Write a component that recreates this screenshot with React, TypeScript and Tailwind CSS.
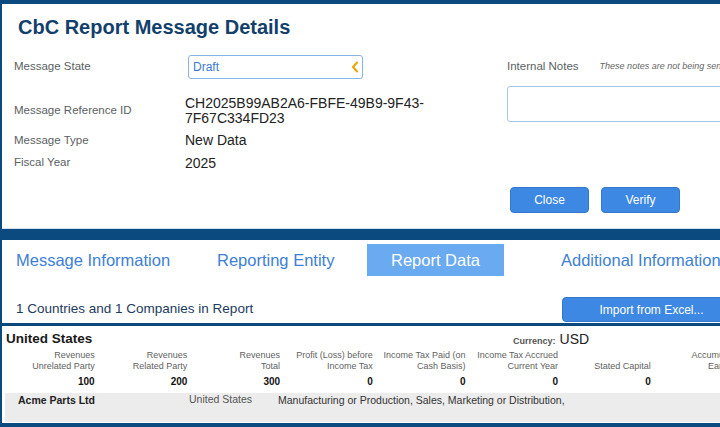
import React from 'react';

const columns = [
  { title: ['Revenues', 'Unrelated Party'], value: '100' },
  { title: ['Revenues', 'Related Party'], value: '200' },
  { title: ['Revenues', 'Total'], value: '300' },
  { title: ['Profit (Loss) before', 'Income Tax'], value: '0' },
  { title: ['Income Tax Paid (on', 'Cash Basis)'], value: '0' },
  { title: ['Income Tax Accrued', 'Current Year'], value: '0' },
  { title: ['', 'Stated Capital'], value: '0' },
  { title: ['Accumulated', 'Earnings'], value: '0' },
];

const DetailRow: React.FC<{ label: string; className?: string; children: React.ReactNode }> = ({
  label,
  className,
  children,
}) => (
  <div className={`flex items-center ${className ?? ''}`}>
    <div className="w-[171px] shrink-0 text-[11.5px] text-[#5b5f63]">{label}</div>
    <div className="text-[14px] leading-[15px] text-[#222]">{children}</div>
  </div>
);

export default function App() {
  return (
    <div className="w-[720px] h-[427px] overflow-hidden bg-[#0b4a7e] pl-[2px] pt-[4px] font-['Liberation_Sans',Arial,sans-serif]">
      {/* message header */}
      <div className="h-[225px] w-[760px] bg-white border-b border-[#cfe2f3] pt-[10px]">
        <h1 className="pl-[16px] text-[20px] leading-[26px] font-bold text-[#133f6d]">
          CbC Report Message Details
        </h1>
        <div className="flex mt-[15px]">
          <div className="w-[505px] shrink-0 pl-[12px]">
            <DetailRow label="Message State" className="h-[24px]">
              <div className="ml-[3px] w-[175px] h-[24px] flex items-center justify-between rounded-[3px] border border-[#86b3e8] pl-[4px] pr-[3px] text-[12px] text-[#3b7bd4]">
                <span>Draft</span>
                <svg width="8" height="12" viewBox="0 0 8 12" fill="none">
                  <path d="M6 1.5 L2 6 L6 10.5" stroke="#e8a400" strokeWidth="2" strokeLinecap="round" strokeLinejoin="round" />
                </svg>
              </div>
            </DetailRow>
            <DetailRow label="Message Reference ID" className="h-[30px] mt-[17px]">
              <div>
                CH2025B99AB2A6-FBFE-49B9-9F43-
                <br />
                7F67C334FD23
              </div>
            </DetailRow>
            <DetailRow label="Message Type" className="h-[21px] mt-[4px]">
              New Data
            </DetailRow>
            <DetailRow label="Fiscal Year" className="h-[22px] mt-[1px]">
              2025
            </DetailRow>
          </div>
          <div className="flex-1">
            <div className="h-[24px] flex items-center whitespace-nowrap">
              <span className="text-[11.5px] text-[#5b5f63]">Internal Notes</span>
              <span className="ml-[21px] text-[9px] italic text-[#666]">
                These notes are not being sent to the tax authority
              </span>
            </div>
            <div className="mt-[7px] h-[36px] w-[250px] rounded-[3px] border border-[#a7c7ea]" />
            <div className="mt-[65px] ml-[3px] flex gap-[12px]">
              <button className="w-[79px] h-[26px] rounded-[4px] bg-[#3d88e2] border border-[#3478cc] text-[12px] text-white">
                Close
              </button>
              <button className="w-[79px] h-[26px] rounded-[4px] bg-[#3d88e2] border border-[#3478cc] text-[12px] text-white">
                Verify
              </button>
            </div>
          </div>
        </div>
      </div>

      {/* tabs */}
      <div className="mt-[11px] h-[83px] w-[760px] bg-white pt-[4px]">
        <div className="flex h-[32px] items-center text-[16.5px] text-[#3d80d6] whitespace-nowrap">
          <div className="w-[215px] pl-[14px]">Message Information</div>
          <div className="w-[150px]">Reporting Entity</div>
          <div className="w-[137px] h-[32px] flex items-center justify-center bg-[#69aaf1] text-white">
            Report Data
          </div>
          <div className="pl-[57px]">Additional Information</div>
        </div>
        <div className="mt-[21px] h-[25px] flex items-center">
          <div className="w-[560px] pl-[14px] text-[13.5px] text-[#1c3b5d]">
            1 Countries and 1 Companies in Report
          </div>
          <button className="w-[179px] h-[25px] rounded-[4px] bg-[#3d88e2] border border-[#3478cc] text-[12px] text-white">
            Import from Excel...
          </button>
        </div>
      </div>

      {/* country data */}
      <div className="mt-[3px] h-[97px] w-[760px] bg-white pt-[4px]">
        <div className="flex h-[18px] items-center">
          <div className="w-[511px] pl-[4px] text-[13.5px] font-bold text-[#1a1a1a]">United States</div>
          <div className="flex items-baseline gap-[4px]">
            <span className="text-[9px] font-bold text-[#555]">Currency:</span>
            <span className="text-[14px] text-[#222]">USD</span>
          </div>
        </div>
        <div className="mt-[2px] grid grid-cols-[repeat(8,92.7px)] text-right">
          {columns.map((c) => (
            <div key={c.title[1]} className="text-[9px] leading-[11px] text-[#5f5f5f] whitespace-nowrap">
              <div>{c.title[0] || '\u00a0'}</div>
              <div>{c.title[1]}</div>
            </div>
          ))}
        </div>
        <div className="mt-[4px] grid grid-cols-[repeat(8,92.7px)] text-right">
          {columns.map((c) => (
            <div key={c.title[1]} className="text-[10px] leading-[12px] font-bold text-[#111]">
              {c.value}
            </div>
          ))}
        </div>
        <div className="mt-[5px] ml-[3px] h-[29px] bg-[#ececec] flex leading-[14px] whitespace-nowrap">
          <div className="w-[90px] text-right text-[10.5px] font-bold text-[#222]">Acme Parts Ltd</div>
          <div className="w-[94px]" />
          <div className="w-[89px] text-[10.5px] text-[#555] -mt-[1px]">United States</div>
          <div className="text-[10.5px] text-[#333]">
            Manufacturing or Production, Sales, Marketing or Distribution,
          </div>
        </div>
      </div>
    </div>
  );
}
